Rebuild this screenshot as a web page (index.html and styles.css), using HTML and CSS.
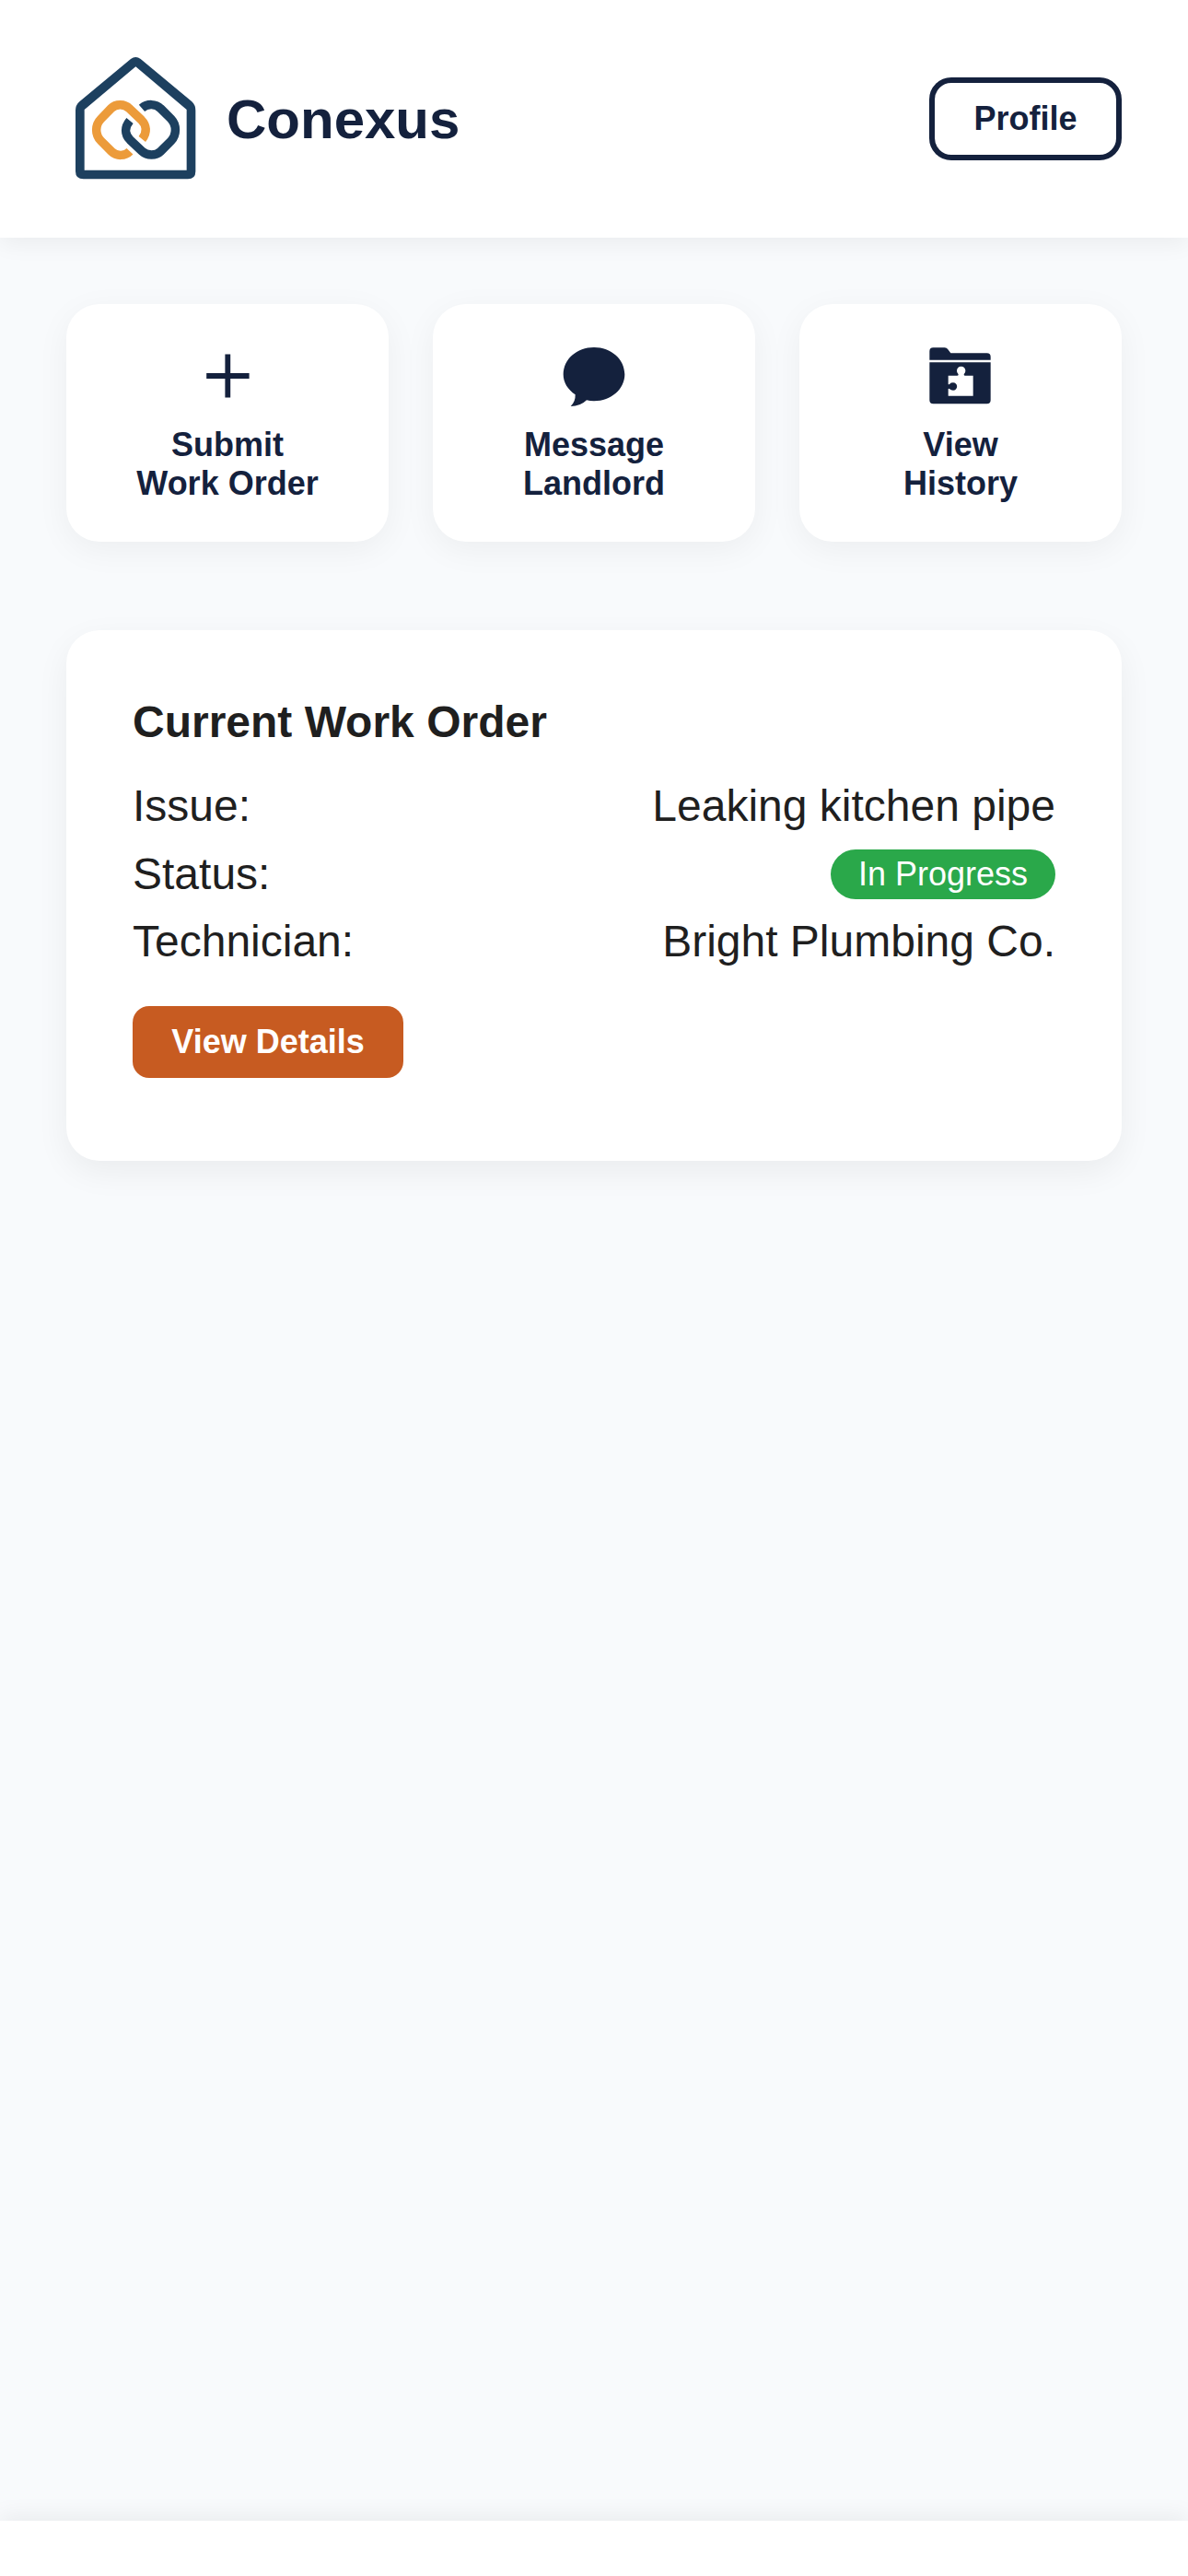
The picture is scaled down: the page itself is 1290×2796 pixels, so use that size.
FILE: index.html
```html
<!DOCTYPE html>
<html lang="en">
<head>
<meta charset="utf-8">
<title>Conexus</title>
<link rel="stylesheet" href="styles.css">
</head>
<body>
<header class="header">
  <div class="brand">
    <svg class="logo" viewBox="36 42 450 450" aria-hidden="true">
      <path class="logo-house" fill-rule="evenodd" d="M66 240Q66 222 79 211L246 72Q262 60 278 72L445 211Q457 222 457 240V438Q457 463 432 463H92Q66 463 66 438ZM95 237V434H428V237L262 97Z"/>
      <path class="link link-left" d="M243 373C228 389 199 389 184 374L149 339C129 319 129 287 149 267L182 233C197 217 226 217 241 233L280 270C298 288 300 312 283 333"/>
      <path class="link link-right" d="M282 232C299 217 328 217 343 233L377 267C396 287 396 319 377 339L343 373C328 388 299 388 283 373L244 336C225 317 226 293 243 273"/>
    </svg>
    <span class="brand-name">Conexus</span>
  </div>
  <button class="profile">Profile</button>
</header>
<main class="main">
  <nav class="actions">
    <a class="action">
      <svg class="icon" viewBox="0 0 72 72" aria-hidden="true"><path d="M33.400 12.600h5.800v20.500H59.600v5.800H39.200v20.500h-5.800V38.900H13.200v-5.800H33.400z"/></svg>
      <span>Submit<br>Work Order</span>
    </a>
    <a class="action">
      <svg class="icon" viewBox="57 36 216 216" aria-hidden="true"><path d="M165 51C221 51 265 90 265 139C265 187 221 226 165 226Q152 226 141 223Q121 243 89 243Q105 228 104 205C80 189 65 166 65 139C65 90 109 51 165 51Z"/></svg>
      <span>Message<br>Landlord</span>
    </a>
    <a class="action">
      <svg class="icon" viewBox="51 36 216 216" aria-hidden="true"><path fill-rule="evenodd" d="M58 92V64Q58 52 70 52H107Q114 52 118 58L127 70H245Q257 70 257 82V92ZM58 100H257V223Q257 235 245 235H70Q58 235 58 223ZM119 143H148Q154 143 151 137A14 14 0 1 1 171 137Q168 143 174 143H200V209H119V187Q119 184 124 187Q127 191 135 191A12 12 0 0 0 135 166Q127 166 124 170Q119 173 119 170Z"/></svg>
      <span>View<br>History</span>
    </a>
  </nav>
  <section class="card">
    <h2 class="card-title">Current Work Order</h2>
    <div class="row"><span>Issue:</span><span>Leaking kitchen pipe</span></div>
    <div class="row"><span>Status:</span><span class="badge">In Progress</span></div>
    <div class="row"><span>Technician:</span><span>Bright Plumbing Co.</span></div>
    <button class="details">View Details</button>
  </section>
</main>
<footer class="footer"></footer>
</body>
</html>
```
FILE: styles.css
```css
* { box-sizing: border-box; }

body {
  display: flex;
  flex-direction: column;
  margin: 0;
  height: 2796px;
  background: #f8fafc;
  color: #1f1f1f;
  font-family: "Liberation Sans", Arial, sans-serif;
  font-size: 48px;
}

button { font-family: inherit; font-size: 36px; font-weight: 700; line-height: 42px; }

.header {
  display: flex;
  align-items: center;
  justify-content: space-between;
  height: 258px;
  padding: 0 72px;
  background: #fff;
  box-shadow: 0 6px 24px rgba(0, 0, 0, 0.06);
}

.brand { display: flex; align-items: center; gap: 24px; }
.logo { width: 150px; height: 150px; }
.logo-house { fill: #1d405f; }
.link { fill: none; stroke-width: 28.5; }
.link-left { stroke: #ec9b3a; }
.link-right { stroke: #1d405f; }
.brand-name { color: #14213d; font-size: 60px; font-weight: 700; }

.profile {
  width: 209px;
  padding: 18px 0;
  border: 6px solid #14213d;
  border-radius: 24px;
  background: #fff;
  color: #14213d;
}

.main { flex: 1; padding: 72px; }

.actions {
  display: grid;
  grid-template-columns: repeat(3, 1fr);
  gap: 48px;
  margin-bottom: 96px;
}

.action {
  display: flex;
  flex-direction: column;
  align-items: center;
  gap: 18px;
  padding: 42px 0;
  border-radius: 36px;
  background: #fff;
  box-shadow: 0 9px 36px rgba(0, 0, 0, 0.05);
  color: #14213d;
  font-size: 36px;
  font-weight: 700;
  line-height: 42px;
  text-align: center;
}

.icon { width: 72px; height: 72px; fill: #14213d; }

.card {
  height: 576px;
  padding: 72px;
  border-radius: 36px;
  background: #fff;
  box-shadow: 0 12px 36px rgba(0, 0, 0, 0.06);
}

.card-title { margin: 0 0 36px; font-size: 48px; line-height: 55px; }

.row {
  display: flex;
  align-items: center;
  justify-content: space-between;
  height: 55.5px;
  margin-bottom: 18px;
  line-height: 55.5px;
}

.badge {
  margin-top: 2px;
  padding: 6px 30px;
  border-radius: 30px;
  background: #2aa84a;
  color: #fff;
  font-size: 36px;
  line-height: 42px;
}

.details {
  display: block;
  width: 294px;
  margin-top: 42px;
  padding: 18px 0;
  border: 0;
  border-radius: 18px;
  background: #c75b21;
  color: #fff;
}

.footer {
  height: 60px;
  background: #fff;
  box-shadow: 0 -6px 24px rgba(0, 0, 0, 0.06);
}
```
